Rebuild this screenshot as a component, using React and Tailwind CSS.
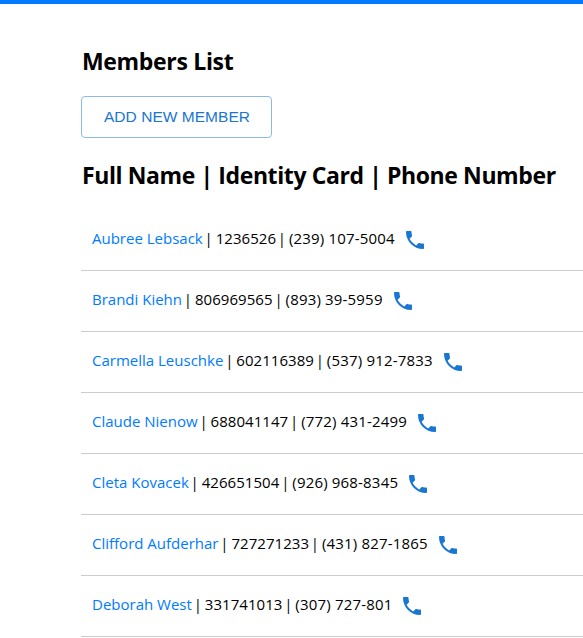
const members = [
  { name: 'Aubree Lebsack', id: '1236526', phone: '(239) 107-5004' },
  { name: 'Brandi Kiehn', id: '806969565', phone: '(893) 39-5959' },
  { name: 'Carmella Leuschke', id: '602116389', phone: '(537) 912-7833' },
  { name: 'Claude Nienow', id: '688041147', phone: '(772) 431-2499' },
  { name: 'Cleta Kovacek', id: '426651504', phone: '(926) 968-8345' },
  { name: 'Clifford Aufderhar', id: '727271233', phone: '(431) 827-1865' },
  { name: 'Deborah West', id: '331741013', phone: '(307) 727-801' },
];

function PhoneIcon() {
  return (
    <svg viewBox="0 0 24 24" className="ml-2 size-6 shrink-0 fill-[#1976d2]">
      <path d="M6.62 10.79c1.44 2.83 3.76 5.14 6.59 6.59l2.2-2.2c.27-.27.67-.36 1.02-.24 1.12.37 2.33.57 3.57.57.55 0 1 .45 1 1V20c0 .55-.45 1-1 1-9.39 0-17-7.61-17-17 0-.55.45-1 1-1h3.5c.55 0 1 .45 1 1 0 1.25.2 2.45.57 3.57.11.35.03.74-.25 1.02l-2.2 2.2z" />
    </svg>
  );
}

function Separator() {
  return (
    <>
      <span className="tracking-[-2.1px]"> </span>
      <span className="tracking-[-0.5px]">{'| '}</span>
    </>
  );
}

function MemberRow({ name, id, phone }) {
  return (
    <li className="flex h-[61px] items-center border-b border-[#ccc] pl-[11px] text-[15px] whitespace-pre">
      <span className="-mt-1">
        <a className="text-[#007bff]">{name}</a>
        <Separator />
        <span className="tracking-[0.05px]">{id}</span>
        <Separator />
        <span className="tracking-[0.18px]">{phone}</span>
      </span>
      <PhoneIcon />
    </li>
  );
}

export default function App() {
  return (
    <div className="h-[638px] overflow-hidden border-t-4 border-[#007bff] bg-white pl-[81px] font-['Open_Sans',sans-serif] text-black">
      <h2 className="mt-[41px] h-8 pl-px text-[23px] leading-8 font-bold tracking-[-0.33px] whitespace-nowrap">
        Members List
      </h2>
      <button className="mt-[19px] flex h-[42px] w-[191px] items-center justify-center rounded border border-[#8cbae8] pl-px font-['Liberation_Sans',sans-serif] text-[15.5px] tracking-[0.04px] whitespace-nowrap text-[#1976d2]">
        ADD NEW MEMBER
      </button>
      <h2 className="mt-[21px] h-8 pl-px text-[23px] leading-8 font-bold tracking-[-0.4px] whitespace-nowrap">
        Full Name | Identity Card | Phone Number
      </h2>
      <ul className="mt-[19px]">
        {members.map((member) => (
          <MemberRow key={member.id} {...member} />
        ))}
      </ul>
    </div>
  );
}
